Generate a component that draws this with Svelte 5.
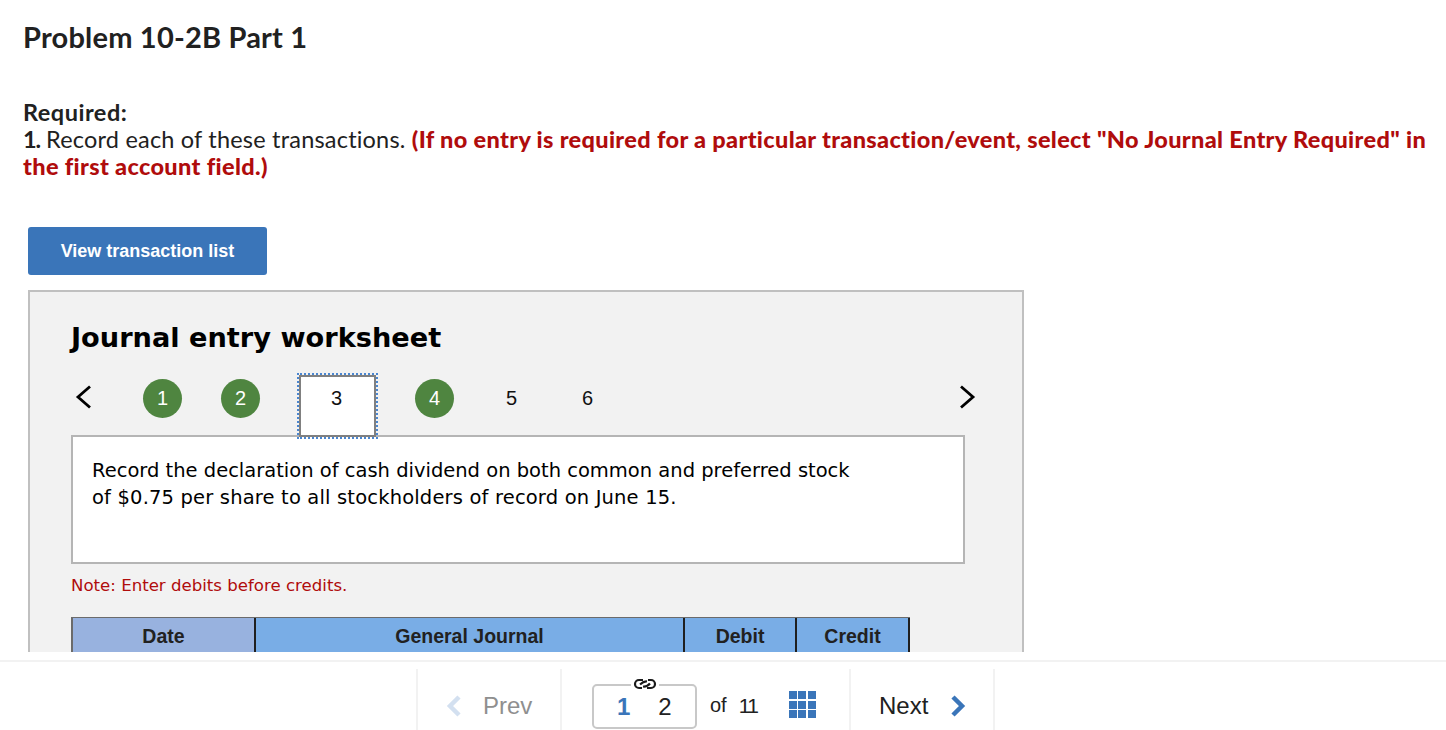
<script>
    const steps = [
        { n: 1, done: true },
        { n: 2, done: true },
        { n: 3, active: true },
        { n: 4, done: true },
        { n: 5 },
        { n: 6 }
    ];
</script>

<div class="page">
    <main class="content">
        <h1>Problem 10-2B Part 1</h1>
        <div class="required">
            <strong class="label">Required:</strong>
            <p><strong class="num-mark">1.</strong> Record each of these transactions. <b class="red">(If no entry is required for a particular transaction/event, select "No Journal Entry Required" in the first account field.)</b></p>
        </div>
        <button class="view-btn">View transaction list</button>

        <section class="worksheet">
            <h2>Journal entry worksheet</h2>
            <div class="stepper">
                <svg class="chev left" width="18" height="24" viewBox="0 0 18 24"><path d="M15 1.5 L3 12 L15 22.5" fill="none" stroke="#000" stroke-width="2.8"/></svg>
                <div class="steps">
                    {#each steps as s}
                        <div class="step" class:done={s.done} class:active={s.active}>{s.n}</div>
                    {/each}
                </div>
                <svg class="chev" width="18" height="24" viewBox="0 0 18 24"><path d="M3 1.5 L15 12 L3 22.5" fill="none" stroke="#000" stroke-width="2.8"/></svg>
            </div>
            <div class="desc">Record the declaration of cash dividend on both common and preferred stock<br><span class="second">of $0.75 per share to all stockholders of record on June 15.</span></div>
            <p class="note">Note: Enter debits before credits.</p>
            <div class="journal">
                <div class="th date">Date</div>
                <div class="th gj">General Journal</div>
                <div class="th num">Debit</div>
                <div class="th num">Credit</div>
            </div>
        </section>
    </main>

    <footer>
        <div class="foot-cell prev">
            <svg width="16" height="24" viewBox="0 0 16 24"><path d="M13 3 L4 12 L13 21" fill="none" stroke="#d3e0f0" stroke-width="4.5"/></svg>
            <span>Prev</span>
        </div>
        <div class="foot-cell pager">
            <div class="page-box">
                <svg class="link" width="24" height="12" viewBox="0 0 24 12"><g fill="none" stroke="#1a1a1a" stroke-width="2.2"><path d="M10 2 H6 a4 4 0 0 0 0 8 H9"/><path d="M14 10 H18 a4 4 0 0 0 0 -8 H15"/><path d="M7 6.5 Q11 3 14 3.5"/><path d="M10 8.5 Q14 9 17 5.5"/></g></svg>
                <b>1</b><span>2</span>
            </div>
            <span class="of">of</span>
            <span class="total">11</span>
            <div class="grid-icon">
                {#each Array(9) as _}<i></i>{/each}
            </div>
        </div>
        <div class="foot-cell next">
            <span>Next</span>
            <svg width="16" height="24" viewBox="0 0 16 24"><path d="M3 3 L12 12 L3 21" fill="none" stroke="#3a75b9" stroke-width="4.5"/></svg>
        </div>
    </footer>
</div>

<style>
    :global(body) {
        margin: 0;
        background: #fff;
        overflow: hidden;
    }
    .page {
        width: 1446px;
        height: 730px;
        overflow: hidden;
        font-family: Lato, "Open Sans", sans-serif;
        font-variant-ligatures: none;
        color: #212121;
    }
    .content {
        height: 652px;
        overflow: hidden;
        padding: 0 0 0 23px;
        box-sizing: border-box;
    }
    h1 {
        margin: 0;
        padding-top: 20px;
        font-size: 29px;
        line-height: 34px;
        font-weight: 700;
        letter-spacing: 0.2px;
    }
    .required {
        margin-top: 45px;
        font-size: 23.5px;
        line-height: 27px;
        width: 1415px;
        letter-spacing: 0.2px;
    }
    .required strong {
        font-weight: 700;
    }
    .label {
        letter-spacing: 0.5px;
    }
    .num-mark {
        letter-spacing: -1.2px;
    }
    .required p {
        margin: 0;
    }
    .red {
        color: #b00c0c;
        font-weight: 900;
        letter-spacing: 0.34px;
    }
    .view-btn {
        display: block;
        margin: 47px 0 15px 5px;
        width: 239px;
        height: 48px;
        border: 0;
        border-radius: 3px;
        background: #3a75b9;
        color: #fff;
        font: bold 18px "Liberation Sans", Arial, sans-serif;
    }
    .worksheet {
        margin-left: 5px;
        width: 996px;
        height: 400px;
        box-sizing: border-box;
        border: 2px solid #c0c0c0;
        background: #f2f2f2;
        padding: 28px 0 0 41px;
    }
    h2 {
        margin: 0;
        font: bold 27.2px/35px "DejaVu Sans", Verdana, sans-serif;
        color: #000;
    }
    .stepper {
        margin-top: 17px;
        width: 905px;
        height: 68px;
        display: flex;
        align-items: flex-start;
        justify-content: space-between;
        position: relative;
    }
    .chev {
        margin-top: 13px;
    }
    .chev.left {
        margin-left: 4px;
    }
    .steps {
        position: absolute;
        left: 72px;
        top: 7px;
        display: flex;
        align-items: flex-start;
        gap: 39px;
    }
    .step {
        width: 37px;
        height: 39px;
        display: flex;
        align-items: center;
        justify-content: center;
        font: 20px "Liberation Sans", Arial, sans-serif;
        color: #111;
    }
    .step.done {
        width: 39px;
        border-radius: 50%;
        background: #4f8540;
        color: #fff;
    }
    .step.active {
        width: 77px;
        height: 62px;
        margin-top: -4px;
        padding: 10px 2px 0 0;
        align-items: flex-start;
        line-height: 23px;
        box-sizing: border-box;
        border: 2px solid #808080;
        background: #fff;
        outline: 2px dotted #4a86d0;
        position: relative;
        z-index: 1;
    }
    .desc {
        margin-top: -5px;
        width: 894px;
        height: 129px;
        box-sizing: border-box;
        border: 2px solid #b5b5b5;
        background: #fff;
        padding: 20px 19px 0;
        font: 19.5px/27px "DejaVu Sans", Verdana, sans-serif;
        color: #000;
    }
    .second {
        letter-spacing: 0.17px;
    }
    .note {
        margin: 12px 0 0;
        font: 16.6px/20px "DejaVu Sans", Verdana, sans-serif;
        color: #b00c0c;
    }
    .journal {
        margin-top: 21px;
        width: 839px;
        display: grid;
        grid-template-columns: 185px 429px 112px 113px;
        height: 40px;
        box-sizing: border-box;
        border-top: 1px solid #6b6b6b;
    }
    .th {
        background: #79ade6;
        border-right: 2px solid #1f1f1f;
        box-sizing: border-box;
        text-align: center;
        font: bold 19.5px/36px "Liberation Sans", Arial, sans-serif;
        color: #212121;
    }
    .th.date {
        background: #98b2df;
        border-left: 2px solid #6b6b6b;
    }
    footer {
        margin-top: 8px;
        height: 70px;
        box-sizing: border-box;
        border-top: 2px solid #f2f2f2;
        padding: 7px 0 0 416px;
        display: flex;
        font-family: "Liberation Sans", Arial, sans-serif;
    }
    .foot-cell {
        height: 61px;
        display: flex;
        align-items: center;
        box-sizing: border-box;
        padding-top: 12px;
        border-left: 2px solid #f2f2f2;
        font-size: 24px;
    }
    .prev {
        width: 144px;
        padding-left: 28px;
        gap: 21px;
        color: #8f8f8f;
    }
    .pager {
        width: 289px;
        padding-left: 30px;
    }
    .next {
        width: 146px;
        border-right: 2px solid #f2f2f2;
        padding-left: 28px;
        gap: 22px;
    }
    .page-box {
        position: relative;
        width: 105px;
        height: 45px;
        margin-top: 2px;
        box-sizing: border-box;
        border: 2px solid #c8c8c8;
        border-radius: 5px;
        display: flex;
        align-items: center;
        padding-left: 23px;
        gap: 28px;
    }
    .page-box b {
        color: #3a75b9;
    }
    .link {
        position: absolute;
        left: 37px;
        top: -8px;
        padding: 0 2px;
        background: #fff;
    }
    .of {
        margin-left: 13px;
        font-size: 20px;
    }
    .total {
        margin-left: 12px;
        font-size: 21px;
        letter-spacing: -1.5px;
    }
    .grid-icon {
        margin-left: 31px;
        margin-top: -2px;
        display: grid;
        grid-template-columns: repeat(3, 8px);
        grid-auto-rows: 8px;
        gap: 1.5px;
    }
    .grid-icon i {
        background: #3a75b9;
    }
</style>
